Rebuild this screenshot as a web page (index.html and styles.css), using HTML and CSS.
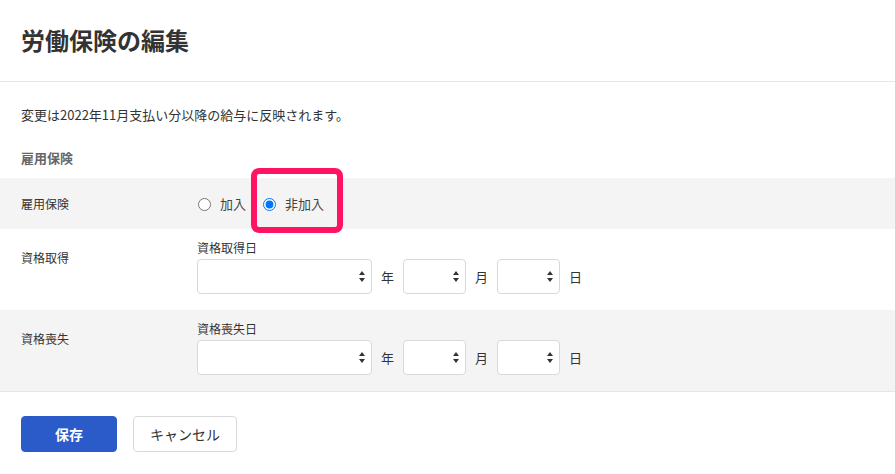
FILE: index.html
```html
<!DOCTYPE html>
<html lang="ja">
<head>
<meta charset="utf-8">
<title>労働保険の編集</title>
<link rel="stylesheet" href="styles.css">
</head>
<body>
<header class="page-header">
  <h1 class="page-title">労働保険の編集</h1>
</header>
<main class="content">
  <p class="notice">変更は2022年11月支払い分以降の給与に反映されます。</p>
  <h2 class="section-title">雇用保険</h2>
  <div class="rows">
    <div class="row row-shaded row-radio">
      <div class="row-label">雇用保険</div>
      <div class="radio-group">
        <label class="radio"><input type="radio" name="koyo"><span>加入</span></label>
        <label class="radio radio-marked"><input type="radio" name="koyo" checked><span>非加入</span><span class="highlight"></span></label>
      </div>
    </div>
    <div class="row">
      <div class="row-label row-label-date">資格取得</div>
      <div class="field">
        <div class="field-label">資格取得日</div>
        <div class="date-inputs">
          <div class="select select-year"><select></select><svg class="arrows" width="6" height="11" viewBox="0 0 6 11"><path d="M3 0L6 4H0z M3 11L0 7H6z" fill="#333"/></svg></div>
          <span class="unit">年</span>
          <div class="select select-small"><select></select><svg class="arrows" width="6" height="11" viewBox="0 0 6 11"><path d="M3 0L6 4H0z M3 11L0 7H6z" fill="#333"/></svg></div>
          <span class="unit">月</span>
          <div class="select select-small"><select></select><svg class="arrows" width="6" height="11" viewBox="0 0 6 11"><path d="M3 0L6 4H0z M3 11L0 7H6z" fill="#333"/></svg></div>
          <span class="unit">日</span>
        </div>
      </div>
    </div>
    <div class="row row-shaded">
      <div class="row-label row-label-date">資格喪失</div>
      <div class="field">
        <div class="field-label">資格喪失日</div>
        <div class="date-inputs">
          <div class="select select-year"><select></select><svg class="arrows" width="6" height="11" viewBox="0 0 6 11"><path d="M3 0L6 4H0z M3 11L0 7H6z" fill="#333"/></svg></div>
          <span class="unit">年</span>
          <div class="select select-small"><select></select><svg class="arrows" width="6" height="11" viewBox="0 0 6 11"><path d="M3 0L6 4H0z M3 11L0 7H6z" fill="#333"/></svg></div>
          <span class="unit">月</span>
          <div class="select select-small"><select></select><svg class="arrows" width="6" height="11" viewBox="0 0 6 11"><path d="M3 0L6 4H0z M3 11L0 7H6z" fill="#333"/></svg></div>
          <span class="unit">日</span>
        </div>
      </div>
    </div>
  </div>
  <div class="actions">
    <button class="btn btn-primary" type="button">保存</button>
    <button class="btn btn-secondary" type="button">キャンセル</button>
  </div>
</main>
</body>
</html>
```
FILE: styles.css
```css
* { box-sizing: border-box; }
html, body { margin: 0; padding: 0; background: #fff; }
body {
  font-family: "Noto Sans CJK JP", "Noto Sans", sans-serif;
  color: #333;
  font-size: 13px;
  width: 895px;
}
.page-header {
  padding: 24px 21px 25px;
  border-bottom: 1px solid #e6e6e6;
}
.page-title {
  margin: 0;
  font-size: 24px;
  line-height: 32px;
  font-weight: 700;
  color: #333;
}
.content { padding-top: 23px; }
.notice {
  margin: 0 21px;
  font-size: 13px;
  line-height: 20px;
}
.section-title {
  margin: 23px 21px 10px;
  font-size: 13px;
  line-height: 20px;
  font-weight: 700;
  color: #666;
}
.rows { border-bottom: 1px solid #e6e6e6; }
.row {
  display: grid;
  grid-template-columns: 176px 1fr;
  padding: 10px 21px 16px;
  align-items: start;
}
.row-shaded { background: #f5f4f5; }
.row-radio { padding: 16px 21px 15px; }
.row-label {
  font-size: 12px;
  line-height: 20px;
}
.row-label-date { margin-top: 10px; line-height: 18px; }
.radio-group {
  display: flex;
  align-items: center;
  gap: 16px;
  height: 20px;
}
.radio {
  position: relative;
  display: inline-flex;
  align-items: center;
  font-size: 13px;
  line-height: 20px;
  color: #444;
}
.radio input {
  margin: 0 9px 0 1px;
  width: 13px;
  height: 13px;
}
.highlight {
  position: absolute;
  left: -11px;
  right: -19px;
  top: -26px;
  bottom: -19px;
  border: 6px solid #ff1464;
  border-radius: 8px;
  pointer-events: none;
}
.field-label {
  font-size: 12px;
  line-height: 18px;
  margin-bottom: 2px;
}
.date-inputs {
  display: flex;
  align-items: center;
}
.select {
  position: relative;
  height: 35px;
}
.select select {
  -webkit-appearance: none;
  appearance: none;
  width: 100%;
  height: 100%;
  border: 1px solid #d9d9d9;
  border-radius: 4px;
  background: #fff;
  margin: 0;
}
.select-year { width: 175px; }
.select-small { width: 63px; }
.arrows {
  position: absolute;
  right: 7px;
  top: 12px;
}
.unit {
  margin: 0 9px;
  font-size: 13px;
  line-height: 20px;
}
.actions {
  display: flex;
  gap: 16px;
  padding: 24px 21px;
}
.btn {
  height: 36px;
  border-radius: 4px;
  font-family: inherit;
  font-size: 14px;
  cursor: pointer;
}
.btn-primary {
  width: 96px;
  background: #2a5bc9;
  border: 1px solid #2a5bc9;
  color: #fff;
  font-weight: 700;
}
.btn-secondary {
  width: 104px;
  background: #fff;
  border: 1px solid #d9d9d9;
  color: #333;
}
```
